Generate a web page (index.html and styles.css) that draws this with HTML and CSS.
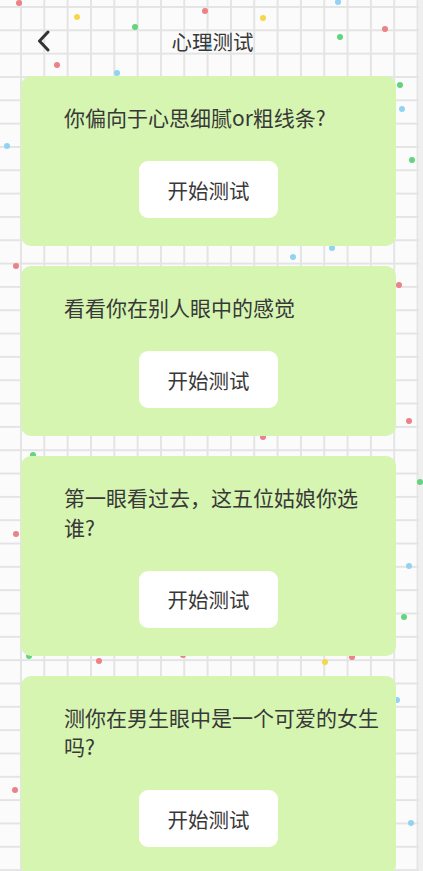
FILE: index.html
```html
<!DOCTYPE html>
<html lang="zh-CN">
<head>
<meta charset="utf-8">
<title>心理测试</title>
<link rel="stylesheet" href="styles.css">
</head>
<body>
<div class="page">
  <div class="confetti" aria-hidden="true">
    <span class="dot red" style="left:19px;top:3px"></span>
    <span class="dot yellow" style="left:77px;top:17px"></span>
    <span class="dot green" style="left:135px;top:27px"></span>
    <span class="dot red" style="left:205px;top:11px"></span>
    <span class="dot yellow" style="left:263px;top:18px"></span>
    <span class="dot blue" style="left:338px;top:2px"></span>
    <span class="dot green" style="left:340px;top:37px"></span>
    <span class="dot red" style="left:385px;top:29px"></span>
    <span class="dot red" style="left:57px;top:65px"></span>
    <span class="dot blue" style="left:117px;top:73px"></span>
    <span class="dot blue" style="left:209px;top:46px"></span>
    <span class="dot green" style="left:400px;top:85px"></span>
    <span class="dot blue" style="left:402px;top:109px"></span>
    <span class="dot blue" style="left:7px;top:146px"></span>
    <span class="dot green" style="left:412px;top:160px"></span>
    <span class="dot blue" style="left:332px;top:248px"></span>
    <span class="dot blue" style="left:293px;top:257px"></span>
    <span class="dot red" style="left:16px;top:266px"></span>
    <span class="dot red" style="left:399px;top:285px"></span>
    <span class="dot red" style="left:409px;top:421px"></span>
    <span class="dot red" style="left:263px;top:437px"></span>
    <span class="dot green" style="left:33px;top:455px"></span>
    <span class="dot green" style="left:420px;top:482px"></span>
    <span class="dot red" style="left:16px;top:534px"></span>
    <span class="dot blue" style="left:409px;top:566px"></span>
    <span class="dot green" style="left:404px;top:617px"></span>
    <span class="dot green" style="left:29px;top:656px"></span>
    <span class="dot red" style="left:99px;top:661px"></span>
    <span class="dot red" style="left:183px;top:655px"></span>
    <span class="dot yellow" style="left:325px;top:662px"></span>
    <span class="dot red" style="left:352px;top:657px"></span>
    <span class="dot blue" style="left:397px;top:700px"></span>
    <span class="dot red" style="left:15px;top:790px"></span>
    <span class="dot blue" style="left:411px;top:823px"></span>
  </div>

  <header class="topbar">
    <button class="back" type="button" aria-label="返回">
      <svg width="16" height="22" viewBox="0 0 16 22"><polyline points="12,2 3.5,11 12,20" fill="none" stroke="#333" stroke-width="3" stroke-linecap="round" stroke-linejoin="round"/></svg>
    </button>
    <h1 class="title">心理测试</h1>
    <span class="spacer"></span>
  </header>

  <main class="list">
    <section class="card">
      <p class="card-title">你偏向于心思细腻or粗线条?</p>
      <button class="card-btn" type="button">开始测试</button>
    </section>
    <section class="card">
      <p class="card-title">看看你在别人眼中的感觉</p>
      <button class="card-btn" type="button">开始测试</button>
    </section>
    <section class="card">
      <p class="card-title">第一眼看过去，这五位姑娘你选谁?</p>
      <button class="card-btn" type="button">开始测试</button>
    </section>
    <section class="card">
      <p class="card-title">测你在男生眼中是一个可爱的女生吗?</p>
      <button class="card-btn" type="button">开始测试</button>
    </section>
  </main>
</div>
</body>
</html>
```

FILE: styles.css
```css
html, body {
  margin: 0;
  padding: 0;
}

body {
  width: 423px;
  height: 871px;
  overflow: hidden;
  font-family: "Noto Sans CJK SC", "Noto Sans", sans-serif;
  color: #383838;
  background-color: #fbfbfb;
  background-image:
    linear-gradient(to right, transparent 419px, #efefef 419px),
    linear-gradient(to right, #e4e4e4 1.5px, transparent 1.5px),
    linear-gradient(to bottom, #e4e4e4 1.5px, transparent 1.5px);
  background-size: 423px 871px, 23.333px 23.333px, 23.333px 23.333px;
  background-position: 0 0, 20px 6px, 20px 6px;
  background-repeat: no-repeat, repeat, repeat;
}

.page {
  position: relative;
  height: 871px;
}

.confetti {
  position: absolute;
  inset: 0;
  z-index: 0;
}

.dot {
  position: absolute;
  width: 6px;
  height: 6px;
  margin: -3px 0 0 -3px;
  border-radius: 50%;
}

.dot.red { background: #ee8088; }
.dot.yellow { background: #f6d64a; }
.dot.green { background: #62d47e; }
.dot.blue { background: #92d2f2; }

.topbar {
  position: relative;
  z-index: 1;
  display: grid;
  grid-template-columns: 1fr auto 1fr;
  align-items: center;
  height: 76px;
  padding: 6px 0 0 0;
  box-sizing: border-box;
}

.back {
  justify-self: start;
  margin-left: 36px;
  padding: 0;
  border: 0;
  background: none;
  display: flex;
  align-items: center;
}

.title {
  margin: 0;
  font-size: 20.5px;
  font-weight: 400;
  line-height: 28px;
  color: #383838;
  transform: translateX(1px);
}

.list {
  position: relative;
  z-index: 1;
  display: flex;
  flex-direction: column;
  gap: 20px;
  margin: 0 27px 0 21px;
}

.card {
  display: flex;
  flex-direction: column;
  background: #d5f5b1;
  border-radius: 10px;
  padding: 27px 12px 28px;
}

.card-title {
  margin: 0;
  padding-left: 31px;
  width: 320px;
  font-size: 21px;
  line-height: 29.5px;
  color: #383838;
}

.card-btn {
  align-self: center;
  margin-top: 28.5px;
  width: 139px;
  height: 57px;
  border: 0;
  border-radius: 9px;
  background: #fff;
  font-family: "Noto Sans CJK SC", "Noto Sans", sans-serif;
  font-size: 20.5px;
  color: #383838;
  padding: 0;
}
```
